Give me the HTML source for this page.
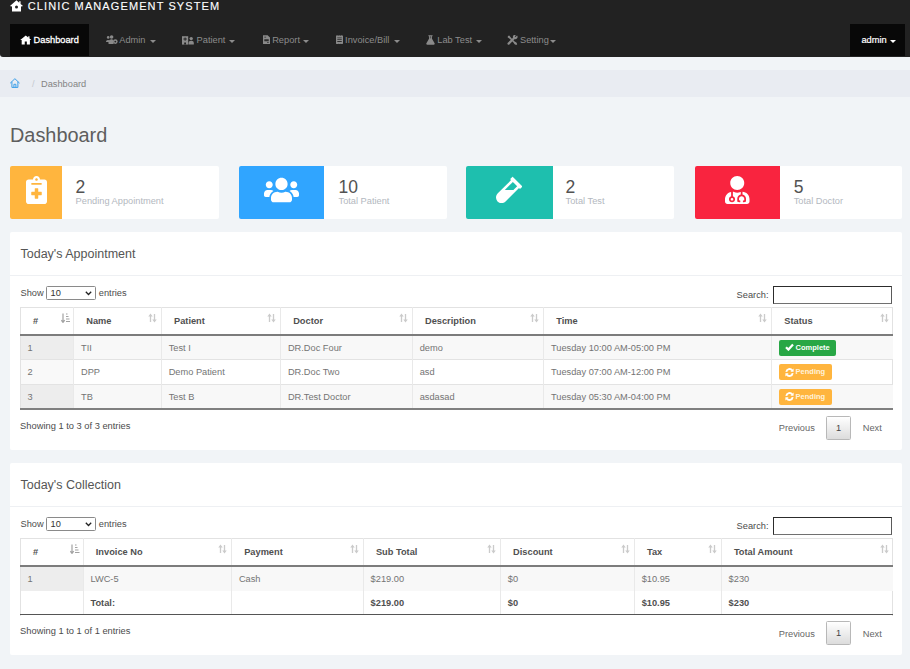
<!DOCTYPE html>
<html><head><meta charset="utf-8">
<style>
*{box-sizing:border-box;margin:0;padding:0}
html,body{width:910px;height:669px;overflow:hidden}
body{background:#f1f4f7;font-family:"Liberation Sans",sans-serif;font-size:9.25px;color:#444;position:relative}
.abs,svg.si{position:absolute}
#top{left:0;top:0;width:910px;height:56.6px;background:#222;border-bottom-left-radius:3px}
#brand{left:27.8px;top:-1px;color:#fff;font-size:11px;letter-spacing:1.1px;-webkit-text-stroke:.12px #fff;line-height:14px;white-space:nowrap}
.nav{position:absolute;top:23.5px;height:32.8px;line-height:33.5px;color:#8c8c8c;font-size:9.25px;white-space:nowrap}
.nav.act{background:#080808;color:#fff}
.nav svg{position:absolute}
.caret{display:inline-block;width:0;height:0;border-left:3.1px solid transparent;border-right:3.1px solid transparent;border-top:3.2px solid currentColor;position:absolute;top:16px}
#bc{left:0;top:69.7px;width:910px;height:27.8px;background:#e9ecf2}
#bc span{position:absolute;top:0;line-height:28.6px;font-size:9.25px;color:#848484}
h1{position:absolute;left:10px;top:124.3px;font-size:19.9px;font-weight:normal;color:#5e5e5e;line-height:22px}
.card{position:absolute;top:165.6px;height:53.3px;background:#fff;border-radius:2px}
.card .ic{position:absolute;left:0;top:0;height:53.3px;border-radius:2px 0 0 2px}
.card .n{position:absolute;top:11px;font-size:17.5px;line-height:20px;color:#525252}
.card .l{position:absolute;top:29.5px;font-size:9.25px;line-height:12px;color:#b3b8c0;white-space:nowrap}
.card svg{position:absolute}
.panel{position:absolute;left:10px;width:892px;background:#fff;border-radius:2px}
.h2{position:absolute;left:20.5px;font-size:12.5px;font-weight:normal;color:#555;line-height:16px;white-space:nowrap}
.hr{position:absolute;left:10px;width:892px;height:1px;background:#eef0f3}
.t{position:absolute;white-space:nowrap;line-height:12px;font-size:9.25px;color:#747474}
.c{color:#4c4c4c}
.th{font-weight:bold;color:#505050}
.b{font-weight:bold;color:#505050}
.sel{position:absolute;width:50px;height:13.4px;border:1px solid #8a8a8a;border-radius:1.5px;background:#fff;font-size:9.25px;line-height:12.6px;padding-left:3.6px;color:#333}
.inp{position:absolute;width:118.6px;height:17.9px;border-style:solid;border-width:1.8px 1.2px 1.5px 1.7px;border-color:#2c2c2c #5a5a5a #707070 #2c2c2c;background:#fff}
.badge{position:absolute;height:16.1px;border-radius:2px;color:#fff;font-size:7.5px;font-weight:bold;line-height:16px;white-space:nowrap}
.pg{position:absolute;width:25.4px;height:24.2px;border:1px solid #b8b8b8;border-radius:1.5px;background:linear-gradient(#fff,#dcdcdc);text-align:center;line-height:22px;font-size:9.25px;color:#444}
</style></head><body>
<div id="top" class="abs"></div>
<svg class="abs" style="left:10px;top:0px" width="13" height="12" viewBox="0 0 13 12"><path d="M6.500 0.300L0.200 5.800l0.900 1 0.900-.8v5.400h9V6l0.900 .8 0.900-1L10.600 3.900V1.200H9.200v1.500z" fill="#fff"/><circle cx="6.500" cy="6.900" r="1.500" fill="#222"/></svg>
<div id="brand" class="abs">CLINIC MANAGEMENT SYSTEM</div>

<div class="nav act" style="left:10.2px;width:78.8px"><svg style="left:10px;top:11.5px" width="11.600" height="10" viewBox="0 0 11 10" preserveAspectRatio="none"><path d="M5.5 0.4L0.2 5h1.4v4.6h2.9V6.6h2v3h2.9V5h1.4L9 3.4V1.2H7.8v1.2z" fill="#fff"/></svg><span class="abs" style="left:23.4px;-webkit-text-stroke:.3px #fff">Dashboard</span></div>

<div class="nav" style="left:105.6px"><svg style="left:0;top:11.3px" width="12" height="10" viewBox="0 0 12 10"><circle cx="2.2" cy="2.4" r="1.3" fill="#8a8a8a"/><circle cx="5.6" cy="2" r="1.8" fill="#8a8a8a"/><path d="M0 6.4a2.2 2 0 0 1 4.2 0V7H0zM2.6 9a3 3.4 0 0 1 5-3.6V9z" fill="#8a8a8a"/><circle cx="9.3" cy="6.6" r="2.3" fill="#8a8a8a"/><circle cx="9.3" cy="6.6" r=".9" fill="#222"/></svg><span class="abs" style="left:13.7px">Admin</span><i class="caret" style="left:44.3px"></i></div>

<div class="nav" style="left:182px"><svg style="left:0;top:11.3px" width="12" height="10" viewBox="0 0 12 10"><path d="M0 1.2h6.2v8.4H0z" fill="#8a8a8a"/><path d="M2.6 2.4h1v1.2h1.2v1H3.6v1.2h-1V4.6H1.4v-1h1.2zM2.2 7.4h1.8v2.2H2.2z" fill="#222"/><circle cx="9.2" cy="3.6" r="1.7" fill="#8a8a8a"/><path d="M6.6 9.6V8.2a2.6 2.4 0 0 1 5.2 0v1.4z" fill="#8a8a8a"/></svg><span class="abs" style="left:14.6px">Patient</span><i class="caret" style="left:47.3px"></i></div>

<div class="nav" style="left:262.9px"><svg style="left:0;top:11.3px" width="7.4" height="9.200" viewBox="0 0 8 10"><path d="M0 0.2h5L7.6 2.8v7H0z" fill="#8a8a8a"/><path d="M1.4 2h2v.8h-2zM1.4 4.6h4.8v2.2H1.4zM4.4 8h1.8v.8H4.4z" fill="#222" opacity=".9"/></svg><span class="abs" style="left:9.3px">Report</span><i class="caret" style="left:40.3px"></i></div>

<div class="nav" style="left:335.8px"><svg style="left:0;top:11.3px" width="7.4" height="9.200" viewBox="0 0 8 10"><path d="M0 0.2l1 .6 1-.6 1 .6 1-.6 1 .6 1-.6 1.6.6v9l-1 -.4-1 .6-1-.6-1 .6-1-.6-1 .6L0 9.6z" fill="#8a8a8a"/><path d="M1.4 2.6h4.8v.9H1.4zM1.4 4.6h4.8v.9H1.4zM1.4 6.6h4.8v.9H1.4z" fill="#222" opacity=".9"/></svg><span class="abs" style="left:9.3px">Invoice/Bill</span><i class="caret" style="left:57.9px"></i></div>

<div class="nav" style="left:425.9px"><svg style="left:0;top:11.3px" width="9" height="10" viewBox="0 0 9 10"><path d="M2.4 0.2h4.2v1H6v2.6l2.6 4.4a1 1 0 0 1-.9 1.5H1.3a1 1 0 0 1-.9-1.5L3 3.8V1.2h-.6z" fill="#8a8a8a"/><path d="M3.8 1.2h1.4v2.2H3.8z" fill="#222" opacity=".5"/></svg><span class="abs" style="left:11.4px">Lab Test</span><i class="caret" style="left:50px"></i></div>

<div class="nav" style="left:507.3px"><svg style="left:0;top:11.3px" width="11" height="10" viewBox="0 0 11 10"><path d="M1 1l1.2-.6 2 2.6 3.4 3.4 1.8 1.2.8 1.6-1 .8-1.6-.8L6.4 7.4 3 4 .6 2.2z" fill="#8a8a8a"/><path d="M10 .6L8.600 2l-.8-.8L9.200-.200A2.400 2.400 0 0 0 6 2.800L.8 7.800a1.100 1.100 0 0 0 1.600 1.600L7.400 4.200A2.400 2.400 0 0 0 10.400 1z" fill="#8a8a8a"/></svg><span class="abs" style="left:12.7px">Setting</span><i class="caret" style="left:43px"></i></div>

<div class="nav act" style="left:850.4px;width:54.6px"><span class="abs" style="left:11px;-webkit-text-stroke:.2px #fff">admin</span><i class="caret" style="left:40px"></i></div>

<div id="bc" class="abs"><svg class="abs" style="left:9.8px;top:8.2px" width="10" height="10" viewBox="0 0 10 10"><path d="M0.500 4.900L4.900 0.700 9.300 4.900M1.900 4.100v5.300h6V4.100M3.900 9.400V6.300h2v3.100" stroke="#3d9fe8" stroke-width="1" fill="none" stroke-linejoin="round" stroke-linecap="round"/></svg><span style="left:32px;color:#c5c9d0">/</span><span style="left:41px">Dashboard</span></div>
<h1>Dashboard</h1>

<div class="card" style="left:10px;width:208.500px"><div class="ic" style="width:52px;background:#ffb53e"></div>
<svg style="left:15.500px;top:10.600px" width="21" height="28" viewBox="0 0 384 512"><path fill="#fff" d="M336 64h-80c0-35.300-28.700-64-64-64s-64 28.700-64 64H48C21.500 64 0 85.500 0 112v352c0 26.500 21.500 48 48 48h288c26.500 0 48-21.500 48-48V112c0-26.500-21.500-48-48-48zM192 40c13.300 0 24 10.700 24 24s-10.700 24-24 24-24-10.700-24-24 10.700-24 24-24zm96 304c0 4.400-3.600 8-8 8h-56v56c0 4.400-3.600 8-8 8h-48c-4.400 0-8-3.600-8-8v-56h-56c-4.400 0-8-3.600-8-8v-48c0-4.400 3.600-8 8-8h56v-56c0-4.400 3.600-8 8-8h48c4.400 0 8 3.600 8 8v56h56c4.400 0 8 3.600 8 8v48zm0-192c0 4.400-3.600 8-8 8H104c-4.400 0-8-3.600-8-8v-16c0-4.400 3.600-8 8-8h176c4.400 0 8 3.600 8 8v16z"/></svg>
<div class="n" style="left:65.6px">2</div><div class="l" style="left:65.6px">Pending Appointment</div></div>

<div class="card" style="left:238.500px;width:208px"><div class="ic" style="width:85.500px;background:#30a5ff"></div>
<svg style="left:25.500px;top:10.500px" width="35" height="28" viewBox="0 0 640 512"><path fill="#fff" d="M96 224c35.300 0 64-28.700 64-64s-28.700-64-64-64-64 28.700-64 64 28.700 64 64 64zm448 0c35.300 0 64-28.700 64-64s-28.700-64-64-64-64 28.700-64 64 28.700 64 64 64zm32 32h-64c-17.600 0-33.500 7.100-45.100 18.600 40.300 22.100 68.900 62 75.100 109.400h66c17.700 0 32-14.300 32-32v-32c0-35.300-28.700-64-64-64zm-256 0c61.900 0 112-50.100 112-112S381.900 32 320 32 208 82.100 208 144s50.100 112 112 112zm76.800 32h-8.300c-20.800 10-43.900 16-68.500 16s-47.600-6-68.500-16h-8.300C179.600 288 128 339.600 128 403.200V432c0 26.500 21.500 48 48 48h288c26.500 0 48-21.500 48-48v-28.800c0-63.600-51.600-115.200-115.200-115.200zm-223.700-13.400C161.500 263.100 145.600 256 128 256H64c-35.300 0-64 28.700-64 64v32c0 17.700 14.300 32 32 32h65.900c6.300-47.400 34.900-87.300 75.200-109.400z"/></svg>
<div class="n" style="left:100px">10</div><div class="l" style="left:100px">Total Patient</div></div>

<div class="card" style="left:466px;width:208px"><div class="ic" style="width:86.500px;background:#1ebfae"></div>
<svg style="left:30px;top:10.500px" width="26.250" height="28" viewBox="0 0 480 512"><path fill="#fff" d="M477.700 186.100L309.500 18.300c-3.100-3.100-8.200-3.100-11.300 0l-34 33.900c-3.100 3.100-3.100 8.200 0 11.300l11.200 11.100L33 316.500c-38.800 38.700-45.100 102-9.400 143.500 20.600 24 49.500 36 78.400 35.900 26.400 0 52.800-10 72.900-30.100l246.300-245.700 11.200 11.100c3.100 3.100 8.200 3.100 11.300 0l34-33.900c3.100-3 3.100-8.100 0-11.200zM318 256H161l148-147.700 78.500 78.300L318 256z"/></svg>
<div class="n" style="left:99.600px">2</div><div class="l" style="left:99.600px">Total Test</div></div>

<div class="card" style="left:694.500px;width:207.500px"><div class="ic" style="width:85.500px;background:#f9243f"></div>
<svg style="left:30.500px;top:10px" width="24.500" height="28" viewBox="0 0 448 512"><path fill="#fff" d="M224 256c70.700 0 128-57.300 128-128S294.700 0 224 0 96 57.300 96 128s57.300 128 128 128zM104 424c0 13.300 10.700 24 24 24s24-10.700 24-24-10.700-24-24-24-24 10.700-24 24zm216-135.400v49c36.500 7.400 64 39.800 64 78.400v41.700c0 7.600-5.400 14.200-12.900 15.700l-32.200 6.400c-4.300.9-8.500-1.900-9.400-6.300l-3.100-15.700c-.9-4.300 1.900-8.600 6.300-9.400l19.300-3.900V416c0-62.800-96-65.100-96 1.900v26.700l19.300 3.900c4.300.9 7.100 5.100 6.300 9.400l-3.100 15.700c-.9 4.300-5.100 7.100-9.400 6.300l-31.200-4.200c-7.900-1.100-13.800-7.800-13.800-15.900V416c0-38.600 27.500-70.900 64-78.400v-45.200c-2.200.7-4.400 1.100-6.600 1.900-18 6.300-37.300 9.800-57.400 9.800s-39.400-3.500-57.400-9.800c-7.400-2.600-14.900-4.200-22.600-5.200v81.600c23.100 6.900 40 28.100 40 53.400 0 30.900-25.100 56-56 56s-56-25.100-56-56c0-25.300 16.900-46.500 40-53.400v-80.400C48.500 301 0 355.800 0 422.400v44.800C0 491.900 20.100 512 44.800 512h358.400c24.700 0 44.800-20.100 44.800-44.800v-44.800c0-72-56.800-130.300-128-133.800z"/></svg>
<div class="n" style="left:99.200px">5</div><div class="l" style="left:99.200px">Total Doctor</div></div>

<div class="panel" style="top:232px;height:217.5px"></div><div class="h2" style="top:246px">Today's Appointment</div><div class="hr" style="top:275px"></div>
<div class="t c" style="left:20.5px;top:287.3px;">Show</div>
<div class="sel" style="left:46px;top:286.3px">10<svg width="7" height="5" viewBox="0 0 7 5" style="position:absolute;right:3.200px;top:3.800px"><path d="M0.800 0.800l2.700 2.700 2.700-2.700" stroke="#222" stroke-width="1.300" fill="none"/></svg></div>
<div class="t c" style="left:98.8px;top:287.3px;">entries</div>
<div class="t c" style="left:736.6px;top:289.3px;">Search:</div>
<div class="inp" style="left:773.3px;top:286px"></div>
<div class="abs" style="left:20px;top:307.3px;width:873.2px;height:102.79999999999998px;border:1px solid #e2e2e2;border-bottom:none;background:#fff"></div>
<div class="abs" style="left:20.5px;top:335.3px;width:872.2px;height:24.4px;background:#f8f8f8"></div>
<div class="abs" style="left:20.5px;top:335.3px;width:53.2px;height:24.4px;background:#ededed"></div>
<div class="abs" style="left:20.5px;top:359.7px;width:53.2px;height:24.4px;background:#f9f9f9"></div>
<div class="abs" style="left:20px;top:359.2px;width:873.2px;height:1px;background:#e3e3e3"></div>
<div class="abs" style="left:20.5px;top:384.1px;width:872.2px;height:24.4px;background:#f8f8f8"></div>
<div class="abs" style="left:20.5px;top:384.1px;width:53.2px;height:24.4px;background:#ededed"></div>
<div class="abs" style="left:20px;top:383.6px;width:873.2px;height:1px;background:#e3e3e3"></div>
<div class="abs" style="left:73.2px;top:307.3px;width:1px;height:101.19999999999999px;background:#e9e9e9"></div>
<div class="abs" style="left:160.9px;top:307.3px;width:1px;height:101.19999999999999px;background:#e9e9e9"></div>
<div class="abs" style="left:280.1px;top:307.3px;width:1px;height:101.19999999999999px;background:#e9e9e9"></div>
<div class="abs" style="left:411.9px;top:307.3px;width:1px;height:101.19999999999999px;background:#e9e9e9"></div>
<div class="abs" style="left:543.2px;top:307.3px;width:1px;height:101.19999999999999px;background:#e9e9e9"></div>
<div class="abs" style="left:771.2px;top:307.3px;width:1px;height:101.19999999999999px;background:#e9e9e9"></div>
<div class="abs" style="left:20px;top:333.8px;width:873.2px;height:2px;background:#7c7c7c"></div>
<div class="abs" style="left:20px;top:407.8px;width:873.2px;height:2px;background:#808080"></div>
<div class="t th" style="left:33px;top:315.2px;">#</div>
<svg class="si" style="left:60.5px;top:313.2px" width="9.500" height="10" viewBox="0 0 9.500 10" opacity=".6"><path d="M2 0.500v8.500M0.300 7.200L2 9.400 3.700 7.200M5 1h1.500M5 3.500h2.500M5 6h3.500M5 8.500h4.500" stroke="#666" stroke-width="1.200" fill="none"/></svg>
<div class="t th" style="left:86.3px;top:315.2px;">Name</div>
<svg class="si" style="left:147.8px;top:313.0px" width="9" height="10" viewBox="0 0 9 10" opacity=".3"><path d="M2.500 9V2M6.500 1v7" stroke="#555" stroke-width="1.300" fill="none"/><path d="M0.300 3.600L2.500 0.600 4.700 3.600zM4.300 6.400L6.500 9.400 8.700 6.400z" fill="#555"/></svg>
<div class="t th" style="left:174.0px;top:315.2px;">Patient</div>
<svg class="si" style="left:267.0px;top:313.0px" width="9" height="10" viewBox="0 0 9 10" opacity=".3"><path d="M2.500 9V2M6.500 1v7" stroke="#555" stroke-width="1.300" fill="none"/><path d="M0.300 3.600L2.500 0.600 4.700 3.600zM4.300 6.400L6.500 9.400 8.700 6.400z" fill="#555"/></svg>
<div class="t th" style="left:293.20000000000005px;top:315.2px;">Doctor</div>
<svg class="si" style="left:398.79999999999995px;top:313.0px" width="9" height="10" viewBox="0 0 9 10" opacity=".3"><path d="M2.500 9V2M6.500 1v7" stroke="#555" stroke-width="1.300" fill="none"/><path d="M0.300 3.600L2.500 0.600 4.700 3.600zM4.300 6.400L6.500 9.400 8.700 6.400z" fill="#555"/></svg>
<div class="t th" style="left:425.0px;top:315.2px;">Description</div>
<svg class="si" style="left:530.1px;top:313.0px" width="9" height="10" viewBox="0 0 9 10" opacity=".3"><path d="M2.500 9V2M6.500 1v7" stroke="#555" stroke-width="1.300" fill="none"/><path d="M0.300 3.600L2.500 0.600 4.700 3.600zM4.300 6.400L6.500 9.400 8.700 6.400z" fill="#555"/></svg>
<div class="t th" style="left:556.3000000000001px;top:315.2px;">Time</div>
<svg class="si" style="left:758.1px;top:313.0px" width="9" height="10" viewBox="0 0 9 10" opacity=".3"><path d="M2.500 9V2M6.500 1v7" stroke="#555" stroke-width="1.300" fill="none"/><path d="M0.300 3.600L2.500 0.600 4.700 3.600zM4.300 6.400L6.500 9.400 8.700 6.400z" fill="#555"/></svg>
<div class="t th" style="left:784.3000000000001px;top:315.2px;">Status</div>
<svg class="si" style="left:879.6px;top:313.0px" width="9" height="10" viewBox="0 0 9 10" opacity=".3"><path d="M2.500 9V2M6.500 1v7" stroke="#555" stroke-width="1.300" fill="none"/><path d="M0.300 3.600L2.500 0.600 4.700 3.600zM4.300 6.400L6.500 9.400 8.700 6.400z" fill="#555"/></svg>
<div class="t" style="left:27.6px;top:341.90000000000003px;">1</div>
<div class="t" style="left:81.0px;top:341.90000000000003px;">TII</div>
<div class="t" style="left:168.70000000000002px;top:341.90000000000003px;">Test I</div>
<div class="t" style="left:287.90000000000003px;top:341.90000000000003px;">DR.Doc Four</div>
<div class="t" style="left:419.7px;top:341.90000000000003px;">demo</div>
<div class="t" style="left:551.0px;top:341.90000000000003px;">Tuesday 10:00 AM-05:00 PM</div>
<div class="badge" style="left:778.3000000000001px;top:339.90000000000003px;width:57.3px;margin-left:.6px;background:#28a745"><svg width="9" height="8" viewBox="0 0 9 8" style="position:absolute;left:6px;top:3.600px"><path d="M1 4.2l2.4 2.4L8 1.6" stroke="#fff" stroke-width="2.200" fill="none"/></svg><span style="position:absolute;left:16.700px">Complete</span></div>
<div class="t" style="left:27.6px;top:366.3px;">2</div>
<div class="t" style="left:81.0px;top:366.3px;">DPP</div>
<div class="t" style="left:168.70000000000002px;top:366.3px;">Demo Patient</div>
<div class="t" style="left:287.90000000000003px;top:366.3px;">DR.Doc Two</div>
<div class="t" style="left:419.7px;top:366.3px;">asd</div>
<div class="t" style="left:551.0px;top:366.3px;">Tuesday 07:00 AM-12:00 PM</div>
<div class="badge" style="left:778.3000000000001px;top:364.3px;width:52.9px;margin-left:.7px;margin-top:.2px;height:15.7px;line-height:15.4px;background:#ffb53e"><svg width="9" height="9" viewBox="0 0 9 9" style="position:absolute;left:5.600px;top:3.200px"><path d="M1.3 3.9A3.3 3.3 0 0 1 7.2 2.4M7.7 5.1A3.3 3.3 0 0 1 1.8 6.6" stroke="#fff" stroke-width="1.900" fill="none"/><path d="M8.6 0.6v3.2H5.4zM0.4 8.4V5.2h3.2z" fill="#fff"/></svg><span style="position:absolute;left:16.600px;color:#fff3dc">Pending</span></div>
<div class="t" style="left:27.6px;top:390.70000000000005px;">3</div>
<div class="t" style="left:81.0px;top:390.70000000000005px;">TB</div>
<div class="t" style="left:168.70000000000002px;top:390.70000000000005px;">Test B</div>
<div class="t" style="left:287.90000000000003px;top:390.70000000000005px;">DR.Test Doctor</div>
<div class="t" style="left:419.7px;top:390.70000000000005px;">asdasad</div>
<div class="t" style="left:551.0px;top:390.70000000000005px;">Tuesday 05:30 AM-04:00 PM</div>
<div class="badge" style="left:778.3000000000001px;top:388.70000000000005px;width:52.9px;margin-left:.7px;margin-top:.2px;height:15.7px;line-height:15.4px;background:#ffb53e"><svg width="9" height="9" viewBox="0 0 9 9" style="position:absolute;left:5.600px;top:3.200px"><path d="M1.3 3.9A3.3 3.3 0 0 1 7.2 2.4M7.7 5.1A3.3 3.3 0 0 1 1.8 6.6" stroke="#fff" stroke-width="1.900" fill="none"/><path d="M8.6 0.6v3.2H5.4zM0.4 8.4V5.2h3.2z" fill="#fff"/></svg><span style="position:absolute;left:16.600px;color:#fff3dc">Pending</span></div>
<div class="t c" style="left:20.1px;top:419.6px;font-size:9.32px">Showing 1 to 3 of 3 entries</div>
<div class="t" style="left:778.8px;top:421.9px;color:#666">Previous</div>
<div class="pg" style="left:826px;top:416.3px">1</div>
<div class="t" style="left:862.8px;top:421.9px;color:#666">Next</div>
<div class="panel" style="top:463px;height:192px"></div><div class="h2" style="top:477px">Today's Collection</div><div class="hr" style="top:506px"></div>
<div class="t c" style="left:20.5px;top:518.3px;">Show</div>
<div class="sel" style="left:46px;top:517.3px">10<svg width="7" height="5" viewBox="0 0 7 5" style="position:absolute;right:3.200px;top:3.800px"><path d="M0.800 0.800l2.700 2.700 2.700-2.700" stroke="#222" stroke-width="1.300" fill="none"/></svg></div>
<div class="t c" style="left:98.8px;top:518.3px;">entries</div>
<div class="t c" style="left:736.6px;top:520.3px;">Search:</div>
<div class="inp" style="left:773.3px;top:517px"></div>
<div class="abs" style="left:20px;top:538.3px;width:873.2px;height:77.39999999999995px;border:1px solid #e2e2e2;border-bottom:none;background:#fff"></div>
<div class="abs" style="left:20.5px;top:566.3px;width:872.2px;height:24.4px;background:#f8f8f8"></div>
<div class="abs" style="left:20.5px;top:566.3px;width:62.7px;height:24.4px;background:#ededed"></div>
<div class="abs" style="left:82.7px;top:538.3px;width:1px;height:75.79999999999995px;background:#e9e9e9"></div>
<div class="abs" style="left:231.1px;top:538.3px;width:1px;height:75.79999999999995px;background:#e9e9e9"></div>
<div class="abs" style="left:362.8px;top:538.3px;width:1px;height:75.79999999999995px;background:#e9e9e9"></div>
<div class="abs" style="left:500.0px;top:538.3px;width:1px;height:75.79999999999995px;background:#e9e9e9"></div>
<div class="abs" style="left:633.9px;top:538.3px;width:1px;height:75.79999999999995px;background:#e9e9e9"></div>
<div class="abs" style="left:720.8px;top:538.3px;width:1px;height:75.79999999999995px;background:#e9e9e9"></div>
<div class="abs" style="left:20px;top:564.8px;width:873.2px;height:2px;background:#7c7c7c"></div>
<div class="abs" style="left:20px;top:613.8px;width:873.2px;height:1.4px;background:#555"></div>
<div class="t th" style="left:33px;top:546.1999999999999px;">#</div>
<svg class="si" style="left:70.0px;top:544.1999999999999px" width="9.500" height="10" viewBox="0 0 9.500 10" opacity=".6"><path d="M2 0.500v8.500M0.300 7.200L2 9.400 3.700 7.200M5 1h1.500M5 3.500h2.500M5 6h3.500M5 8.500h4.500" stroke="#666" stroke-width="1.200" fill="none"/></svg>
<div class="t th" style="left:95.8px;top:546.1999999999999px;">Invoice No</div>
<svg class="si" style="left:218.0px;top:544.0px" width="9" height="10" viewBox="0 0 9 10" opacity=".3"><path d="M2.500 9V2M6.500 1v7" stroke="#555" stroke-width="1.300" fill="none"/><path d="M0.300 3.600L2.500 0.600 4.700 3.600zM4.300 6.400L6.500 9.400 8.700 6.400z" fill="#555"/></svg>
<div class="t th" style="left:244.2px;top:546.1999999999999px;">Payment</div>
<svg class="si" style="left:349.7px;top:544.0px" width="9" height="10" viewBox="0 0 9 10" opacity=".3"><path d="M2.500 9V2M6.500 1v7" stroke="#555" stroke-width="1.300" fill="none"/><path d="M0.300 3.600L2.500 0.600 4.700 3.600zM4.300 6.400L6.500 9.400 8.700 6.400z" fill="#555"/></svg>
<div class="t th" style="left:375.90000000000003px;top:546.1999999999999px;">Sub Total</div>
<svg class="si" style="left:486.9px;top:544.0px" width="9" height="10" viewBox="0 0 9 10" opacity=".3"><path d="M2.500 9V2M6.500 1v7" stroke="#555" stroke-width="1.300" fill="none"/><path d="M0.300 3.600L2.500 0.600 4.700 3.600zM4.300 6.400L6.500 9.400 8.700 6.400z" fill="#555"/></svg>
<div class="t th" style="left:513.1px;top:546.1999999999999px;">Discount</div>
<svg class="si" style="left:620.8px;top:544.0px" width="9" height="10" viewBox="0 0 9 10" opacity=".3"><path d="M2.500 9V2M6.500 1v7" stroke="#555" stroke-width="1.300" fill="none"/><path d="M0.300 3.600L2.500 0.600 4.700 3.600zM4.300 6.400L6.500 9.400 8.700 6.400z" fill="#555"/></svg>
<div class="t th" style="left:647.0px;top:546.1999999999999px;">Tax</div>
<svg class="si" style="left:707.6999999999999px;top:544.0px" width="9" height="10" viewBox="0 0 9 10" opacity=".3"><path d="M2.500 9V2M6.500 1v7" stroke="#555" stroke-width="1.300" fill="none"/><path d="M0.300 3.600L2.500 0.600 4.700 3.600zM4.300 6.400L6.500 9.400 8.700 6.400z" fill="#555"/></svg>
<div class="t th" style="left:733.9px;top:546.1999999999999px;">Total Amount</div>
<svg class="si" style="left:879.6px;top:544.0px" width="9" height="10" viewBox="0 0 9 10" opacity=".3"><path d="M2.500 9V2M6.500 1v7" stroke="#555" stroke-width="1.300" fill="none"/><path d="M0.300 3.600L2.500 0.600 4.700 3.600zM4.300 6.400L6.500 9.400 8.700 6.400z" fill="#555"/></svg>
<div class="t" style="left:27.6px;top:572.9px;">1</div>
<div class="t" style="left:90.5px;top:572.9px;">LWC-5</div>
<div class="t" style="left:238.9px;top:572.9px;">Cash</div>
<div class="t" style="left:370.6px;top:572.9px;">$219.00</div>
<div class="t" style="left:507.8px;top:572.9px;">$0</div>
<div class="t" style="left:641.6999999999999px;top:572.9px;">$10.95</div>
<div class="t" style="left:728.5999999999999px;top:572.9px;">$230</div>
<div class="t b" style="left:90.5px;top:596.9px;">Total:</div>
<div class="t b" style="left:370.6px;top:596.9px;">$219.00</div>
<div class="t b" style="left:507.8px;top:596.9px;">$0</div>
<div class="t b" style="left:641.6999999999999px;top:596.9px;">$10.95</div>
<div class="t b" style="left:728.5999999999999px;top:596.9px;">$230</div>
<div class="t c" style="left:20.1px;top:625.1999999999999px;font-size:9.32px">Showing 1 to 1 of 1 entries</div>
<div class="t" style="left:778.8px;top:627.4999999999999px;color:#666">Previous</div>
<div class="pg" style="left:826px;top:620.7999999999998px">1</div>
<div class="t" style="left:862.8px;top:627.4999999999999px;color:#666">Next</div>
</body></html>
